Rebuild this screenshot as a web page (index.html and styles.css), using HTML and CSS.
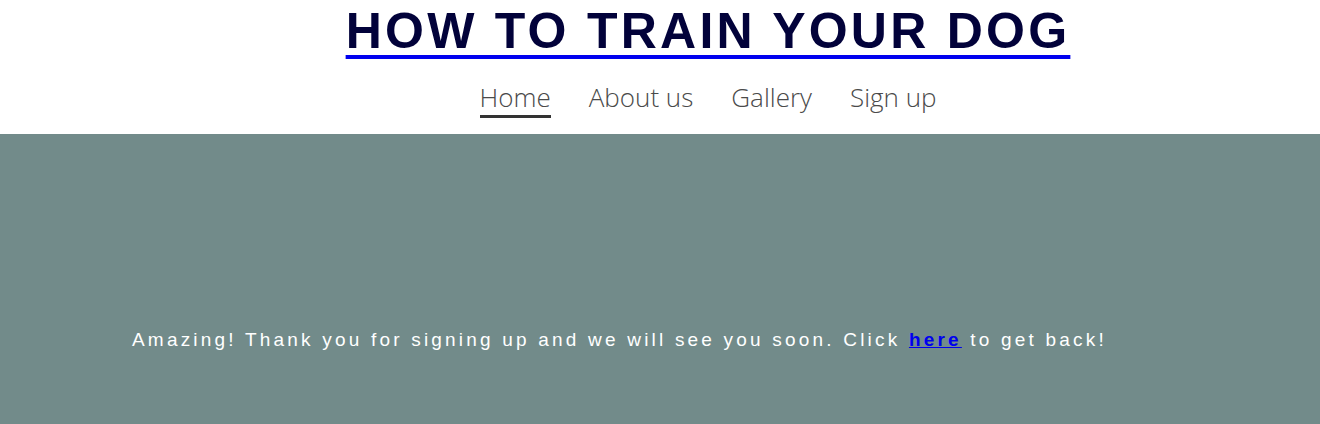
FILE: index.html
```html
<!DOCTYPE html>
<html lang="en">
<head>
<meta charset="utf-8">
<title>How to train your dog</title>
<link rel="stylesheet" href="styles.css">
</head>
<body>
<header class="site-header">
  <h1 class="site-title"><a href="#">HOW TO TRAIN YOUR DOG</a></h1>
  <nav class="main-nav">
    <a href="#" class="nav-link active">Home</a>
    <a href="#" class="nav-link">About us</a>
    <a href="#" class="nav-link">Gallery</a>
    <a href="#" class="nav-link">Sign up</a>
  </nav>
</header>
<main class="thanks">
  <p class="thanks-text">Amazing! Thank you for signing up and we will see you soon. Click <a href="#" class="back-link">here</a> to get back!</p>
</main>
</body>
</html>
```

FILE: styles.css
```css
html, body {
  margin: 0;
  padding: 0;
}
body {
  background: #728b8a;
  font-family: "Liberation Sans", Arial, sans-serif;
}
.site-header {
  background: #ffffff;
  height: 134px;
  padding-left: 96px;
  box-sizing: border-box;
  display: flex;
  flex-direction: column;
  align-items: center;
}
.site-title {
  margin: 0;
  padding-top: 3px;
  font-size: 50px;
  line-height: 57px;
  font-weight: 700;
  letter-spacing: 3.25px;
}
.site-title a {
  color: #02023a;
  text-decoration: underline;
  text-decoration-color: #0000ee;
  text-decoration-thickness: 4px;
  text-underline-offset: 7px;
}
.main-nav {
  display: flex;
  gap: 38px;
  margin-top: 20px;
}
.nav-link {
  font-family: "Open Sans", "Lato", sans-serif;
  font-weight: 300;
  font-size: 26px;
  line-height: 34px;
  color: #4a4a4a;
  text-decoration: none;
  padding-bottom: 1px;
  border-bottom: 3px solid transparent;
}
.nav-link.active {
  border-bottom-color: #333;
}
.thanks {
  height: 290px;
  display: flex;
  align-items: center;
  padding-left: 132px;
  padding-top: 122px;
  box-sizing: border-box;
}
.thanks-text {
  margin: 0;
  color: #ffffff;
  font-size: 19px;
  letter-spacing: 3.2px;
  line-height: 24px;
}
.back-link {
  color: #0000ee;
  font-weight: 700;
}
```
